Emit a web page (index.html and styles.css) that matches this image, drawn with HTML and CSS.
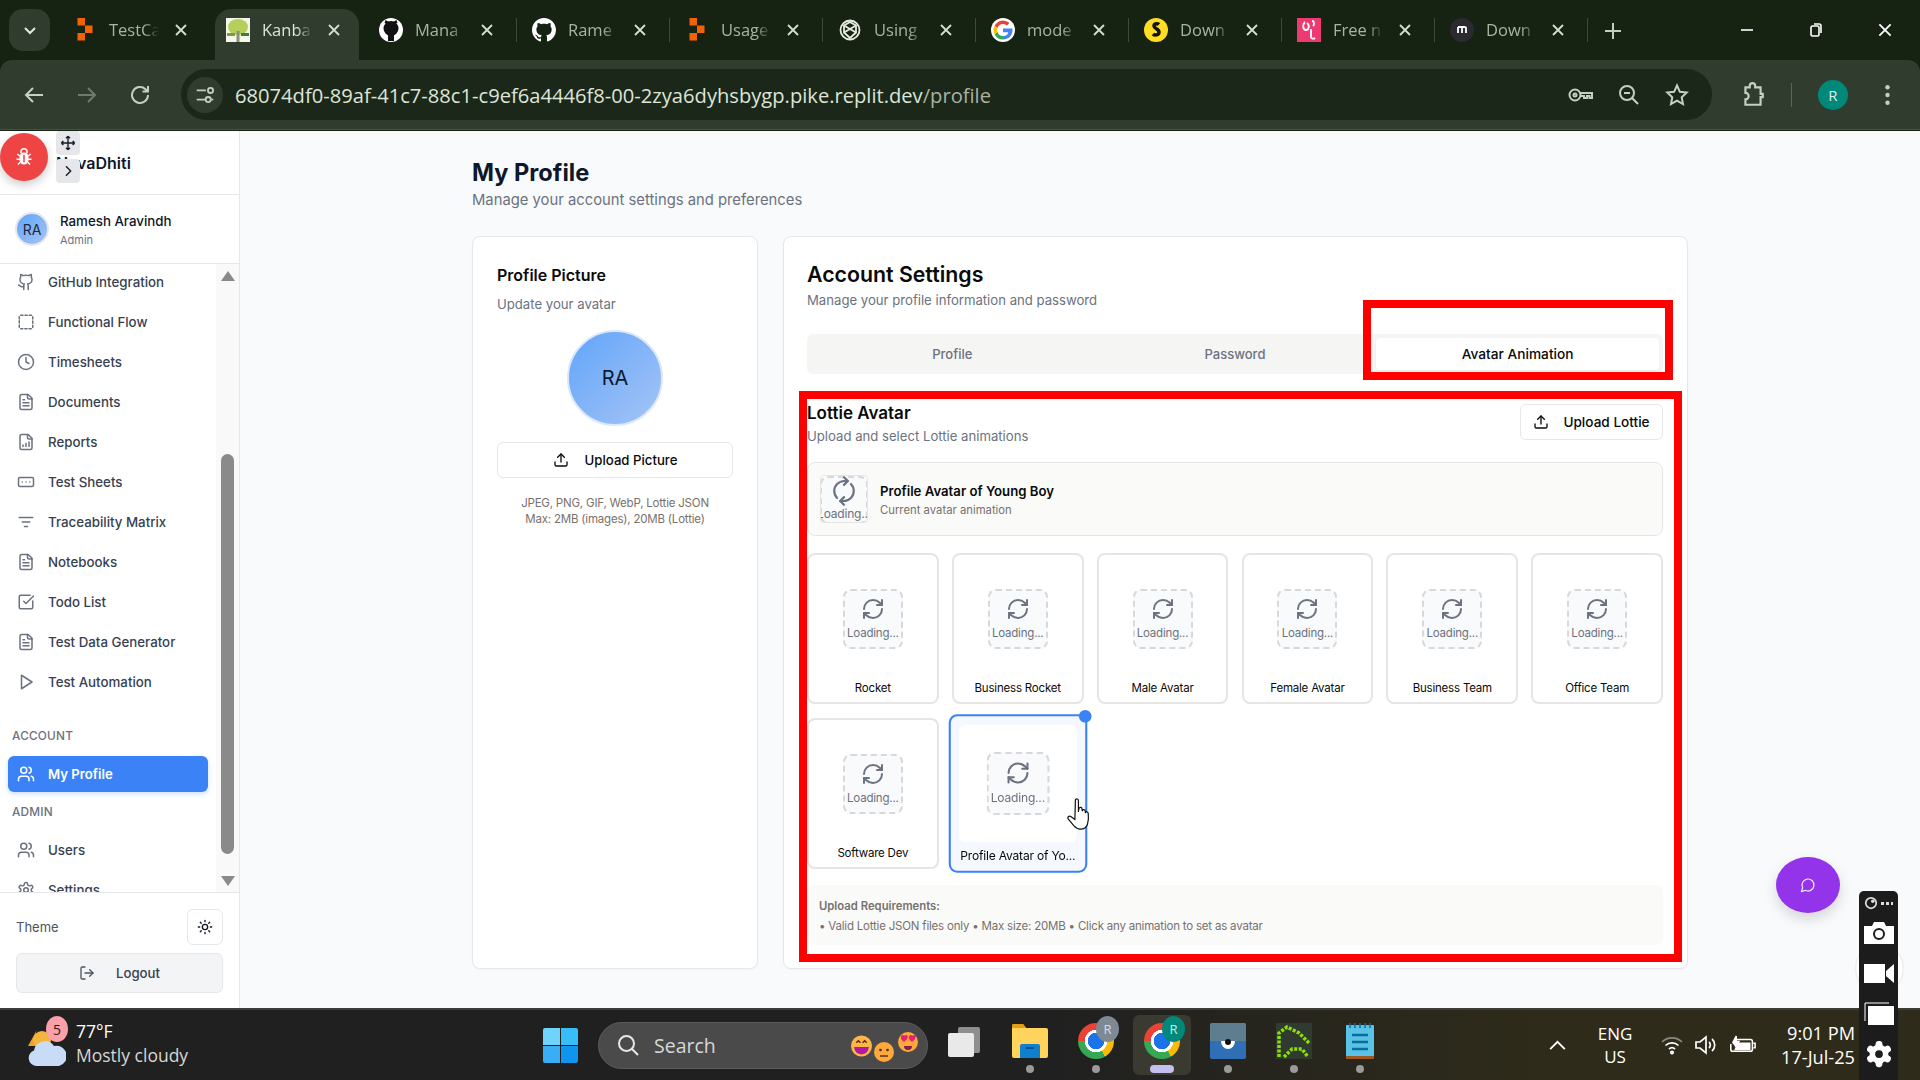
FILE: index.html
```html
<!DOCTYPE html>
<html lang="en">
<head>
<meta charset="utf-8">
<title>My Profile</title>
<link rel="stylesheet" href="styles.css">
</head>
<body>
<svg class="sprite" xmlns="http://www.w3.org/2000/svg">
  <symbol id="i-github" viewBox="0 0 24 24"><path d="M15 22v-4a4.8 4.8 0 0 0-1-3.5c3 0 6-2 6-5.5.08-1.25-.27-2.48-1-3.5.28-1.15.28-2.35 0-3.5 0 0-1 0-3 1.5-2.64-.5-5.36-.5-8 0C6 2 5 2 5 2c-.3 1.15-.3 2.35 0 3.5A5.403 5.403 0 0 0 4 9c0 3.5 3 5.5 6 5.5-.39.49-.68 1.05-.85 1.65-.17.6-.22 1.23-.15 1.85v4"/><path d="M9 18c-4.51 2-5-2-7-2"/></symbol>
  <symbol id="i-dashed" viewBox="0 0 24 24"><rect x="3" y="3" width="18" height="18" rx="2" stroke-dasharray="3 2.6"/></symbol>
  <symbol id="i-clock" viewBox="0 0 24 24"><circle cx="12" cy="12" r="10"/><path d="M12 6v6l4 2"/></symbol>
  <symbol id="i-file" viewBox="0 0 24 24"><path d="M15 2H6a2 2 0 0 0-2 2v16a2 2 0 0 0 2 2h12a2 2 0 0 0 2-2V7Z"/><path d="M14 2v4a2 2 0 0 0 2 2h4"/><path d="M10 9H8"/><path d="M16 13H8"/><path d="M16 17H8"/></symbol>
  <symbol id="i-chart" viewBox="0 0 24 24"><path d="M15 2H6a2 2 0 0 0-2 2v16a2 2 0 0 0 2 2h12a2 2 0 0 0 2-2V7Z"/><path d="M14 2v4a2 2 0 0 0 2 2h4"/><path d="M8 18v-2"/><path d="M12 18v-4"/><path d="M16 18v-6"/></symbol>
  <symbol id="i-sheet" viewBox="0 0 24 24"><rect x="2" y="6" width="20" height="12" rx="2"/><path d="M7 12h.01"/><path d="M12 12h.01"/><path d="M17 12h.01"/></symbol>
  <symbol id="i-lines" viewBox="0 0 24 24"><path d="M3 6h18"/><path d="M7 12h10"/><path d="M10 18h4"/></symbol>
  <symbol id="i-check" viewBox="0 0 24 24"><path d="M21 10.5V19a2 2 0 0 1-2 2H5a2 2 0 0 1-2-2V5a2 2 0 0 1 2-2h12.5"/><path d="m9 11 3 3L22 4"/></symbol>
  <symbol id="i-play" viewBox="0 0 24 24"><polygon points="6 3 20 12 6 21 6 3"/></symbol>
  <symbol id="i-users" viewBox="0 0 24 24"><path d="M16 21v-2a4 4 0 0 0-4-4H6a4 4 0 0 0-4 4v2"/><circle cx="9" cy="7" r="4"/><path d="M22 21v-2a4 4 0 0 0-3-3.87"/><path d="M16 3.13a4 4 0 0 1 0 7.75"/></symbol>
  <symbol id="i-gear" viewBox="0 0 24 24"><path d="M12.22 2h-.44a2 2 0 0 0-2 2v.18a2 2 0 0 1-1 1.73l-.43.25a2 2 0 0 1-2 0l-.15-.08a2 2 0 0 0-2.73.73l-.22.38a2 2 0 0 0 .73 2.73l.15.1a2 2 0 0 1 1 1.72v.51a2 2 0 0 1-1 1.74l-.15.09a2 2 0 0 0-.73 2.73l.22.38a2 2 0 0 0 2.73.73l.15-.08a2 2 0 0 1 2 0l.43.25a2 2 0 0 1 1 1.73V20a2 2 0 0 0 2 2h.44a2 2 0 0 0 2-2v-.18a2 2 0 0 1 1-1.73l.43-.25a2 2 0 0 1 2 0l.15.08a2 2 0 0 0 2.73-.73l.22-.39a2 2 0 0 0-.73-2.73l-.15-.08a2 2 0 0 1-1-1.74v-.5a2 2 0 0 1 1-1.74l.15-.09a2 2 0 0 0 .73-2.73l-.22-.38a2 2 0 0 0-2.73-.73l-.15.08a2 2 0 0 1-2 0l-.43-.25a2 2 0 0 1-1-1.73V4a2 2 0 0 0-2-2z"/><circle cx="12" cy="12" r="3"/></symbol>
  <symbol id="i-sun" viewBox="0 0 24 24"><circle cx="12" cy="12" r="4"/><path d="M12 2v2M12 20v2M4.93 4.93l1.41 1.41M17.66 17.66l1.41 1.41M2 12h2M20 12h2M6.34 17.66l-1.41 1.41M19.07 4.93l-1.41 1.41"/></symbol>
  <symbol id="i-logout" viewBox="0 0 24 24"><path d="M9 21H5a2 2 0 0 1-2-2V5a2 2 0 0 1 2-2h4"/><path d="m16 17 5-5-5-5"/><path d="M21 12H9"/></symbol>
  <symbol id="i-upload" viewBox="0 0 24 24"><path d="M21 15v4a2 2 0 0 1-2 2H5a2 2 0 0 1-2-2v-4"/><path d="m17 8-5-5-5 5"/><path d="M12 3v12"/></symbol>
  <symbol id="i-refresh" viewBox="0 0 24 24"><path d="M3 12a9 9 0 0 1 9-9 9.75 9.75 0 0 1 6.74 2.74L21 8"/><path d="M21 3v5h-5"/><path d="M21 12a9 9 0 0 1-9 9 9.75 9.75 0 0 1-6.74-2.74L3 16"/><path d="M8 16H3v5"/></symbol>
  <symbol id="i-close" viewBox="0 0 16 16"><path d="M3 3l10 10M13 3 3 13"/></symbol>
  <symbol id="f-replit" viewBox="0 0 16 16"><path fill="#f26207" d="M3 0h5v5H3zM8 5h5v5H8zM3 10h5v5H3z"/></symbol>
  <symbol id="f-octo" viewBox="0 0 16 16"><path d="M8 0C3.58 0 0 3.58 0 8c0 3.54 2.29 6.53 5.47 7.59.4.07.55-.17.55-.38 0-.19-.01-.82-.01-1.49-2.01.37-2.53-.49-2.69-.94-.09-.23-.48-.94-.82-1.13-.28-.15-.68-.52-.01-.53.63-.01 1.08.58 1.23.82.72 1.21 1.87.87 2.33.66.07-.52.28-.87.51-1.07-1.78-.2-3.64-.89-3.64-3.95 0-.87.31-1.59.82-2.15-.08-.2-.36-1.02.08-2.12 0 0 .67-.21 2.2.82.64-.18 1.32-.27 2-.27s1.36.09 2 .27c1.53-1.04 2.2-.82 2.2-.82.44 1.1.16 1.92.08 2.12.51.56.82 1.27.82 2.15 0 3.07-1.87 3.75-3.65 3.95.29.25.54.73.54 1.48 0 1.07-.01 1.93-.01 2.2 0 .21.15.46.55.38A8.013 8.013 0 0 0 16 8c0-4.42-3.58-8-8-8z"/></symbol>
</svg>

<header class="chrome">
  <div class="strip">
    <div class="tab-list"><svg class="ic-14 stroke-light"><path d="M2 5l5 5 5-5"/></svg></div>
    <div class="tab"><svg class="fav"><use href="#f-replit"/></svg><span class="tab-title">TestCa</span><svg class="tab-x"><use href="#i-close"/></svg></div>
    <div class="tab tab-active"><svg class="fav" viewBox="0 0 24 24"><rect width="24" height="24" fill="#f4f7ea"/><ellipse cx="12" cy="9" rx="10" ry="8" fill="#b5cf5a"/><rect x="10.5" y="13" width="3" height="11" fill="#8b8f7a"/><rect x="1" y="15" width="8" height="3" fill="#7c9a3a"/><rect x="15" y="15" width="8" height="3" fill="#3f7a4b"/></svg><span class="tab-title">Kanba</span><svg class="tab-x"><use href="#i-close"/></svg></div>
    <div class="tab"><svg class="fav" viewBox="0 0 24 24"><circle cx="12" cy="12" r="12" fill="#fff"/><circle cx="12" cy="10.500" r="7.500" fill="#111"/><path d="M5.500 5l1-3 3.500 2h4l3.500-2 1 3z" fill="#111"/><rect x="9" y="16" width="6" height="7" fill="#111"/></svg><span class="tab-title">Mana</span><svg class="tab-x"><use href="#i-close"/></svg></div>
    <div class="tab"><svg class="fav fav-white"><use href="#f-octo"/></svg><span class="tab-title">Rame</span><svg class="tab-x"><use href="#i-close"/></svg></div>
    <div class="tab"><svg class="fav"><use href="#f-replit"/></svg><span class="tab-title">Usage</span><svg class="tab-x"><use href="#i-close"/></svg></div>
    <div class="tab"><svg class="fav" viewBox="0 0 24 24" fill="none" stroke="#e8ede4" stroke-width="1.8"><circle cx="12" cy="12" r="9.5"/><path d="M12 4l6 3.5v7L12 20l-6-5.5v-7z"/><path d="M6 7.5l12 7M18 7.5l-12 7"/></svg><span class="tab-title">Using</span><svg class="tab-x"><use href="#i-close"/></svg></div>
    <div class="tab"><svg class="fav" viewBox="0 0 24 24"><circle cx="12" cy="12" r="12" fill="#fff"/><path d="M12 6a6 6 0 0 1 4 1.5l2.4-2.4A9.5 9.5 0 0 0 3.6 7.7l2.9 2.2A6 6 0 0 1 12 6z" fill="#ea4335"/><path d="M6.5 14l-2.9 2.2a9.5 9.5 0 0 0 8.400 5.300V18a6 6 0 0 1-5.500-4z" fill="#34a853"/><path d="M3.600 7.700a9.500 9.500 0 0 0 0 8.500l2.900-2.200a6 6 0 0 1 0-4.100z" fill="#fbbc05"/><path d="M21.300 10.500H12v3.700h5.300A5 5 0 0 1 12 18v3.500c5.500 0 9.500-3.800 9.500-9.500 0-.5 0-1-.2-1.500z" fill="#4285f4"/></svg><span class="tab-title">mode</span><svg class="tab-x"><use href="#i-close"/></svg></div>
    <div class="tab"><svg class="fav" viewBox="0 0 24 24"><circle cx="12" cy="12" r="12" fill="#ffdd22"/><path d="M15 6.500c-1-1-5-1.500-5 1.500s5 2.500 5 6-4.500 3.500-6 2" fill="none" stroke="#111" stroke-width="3.500"/></svg><span class="tab-title">Down</span><svg class="tab-x"><use href="#i-close"/></svg></div>
    <div class="tab"><svg class="fav" viewBox="0 0 24 24"><rect width="24" height="24" fill="#ee3a73"/><path d="M8 4c-3 3-2 8 1 8s4-5 1-7M15 3c2 0 3 3 1 5M14 11v8c0 2 3 2 4 1" fill="none" stroke="#fff" stroke-width="1.800"/></svg><span class="tab-title">Free n</span><svg class="tab-x"><use href="#i-close"/></svg></div>
    <div class="tab"><svg class="fav" viewBox="0 0 24 24"><circle cx="12" cy="12" r="12" fill="#2a2a30"/><path d="M8 15V9M12 15V9M16 15V10q0-1-2-1H8" fill="none" stroke="#fff" stroke-width="1.800"/></svg><span class="tab-title">Down</span><svg class="tab-x"><use href="#i-close"/></svg></div>
    <svg class="plus"><path d="M10 2v16M2 10h16"/></svg>
    <div class="win-controls">
      <div class="win-btn"><svg class="win-ic"><path d="M2 8h12"/></svg></div>
      <div class="win-btn"><svg class="win-ic"><rect x="3" y="4" width="8" height="10" rx="1.500"/><path d="M6 2h5a2 2 0 0 1 2 2v7"/></svg></div>
      <div class="win-btn"><svg class="win-ic win-x"><use href="#i-close"/></svg></div>
    </div>
  </div>
  <div class="toolbar">
    <div class="nav-btn"><svg class="tb-ic" viewBox="0 0 24 24"><path d="M21 12H4M11 5l-7 7 7 7"/></svg></div>
    <div class="nav-btn nav-dim"><svg class="tb-ic" viewBox="0 0 24 24"><path d="M3 12h17M13 5l7 7-7 7"/></svg></div>
    <div class="nav-btn"><svg class="tb-ic" viewBox="0 0 24 24"><path d="M20 12a8 8 0 1 1-2.500-5.800L20 8.500M20 3v5.500h-5.500"/></svg></div>
    <div class="pill">
      <div class="site-btn"><svg class="tb-ic tb-ic-sm" viewBox="0 0 24 24"><path d="M3 7h10M19 17h2M3 17h9"/><circle cx="18" cy="7" r="2.800"/><circle cx="15.500" cy="17" r="2.800"/></svg></div>
      <div class="url"><span class="url-host">68074df0-89af-41c7-88c1-c9ef6a4446f8-00-2zya6dyhsbygp.pike.replit.dev</span><span class="url-path">/profile</span></div>
      <div class="pill-ic"><svg class="tb-ic tb-ic-lg" viewBox="0 0 28 24"><circle cx="8" cy="12" r="5.500"/><circle cx="8" cy="12" r="1.500"/><path d="M13 10h12v5h-2.500v-2H20v2h-3v-2h-4"/></svg></div>
      <div class="pill-ic"><svg class="tb-ic" viewBox="0 0 24 24"><circle cx="10" cy="10" r="7"/><path d="M15 15l6 6M7 10h6"/></svg></div>
      <div class="pill-ic"><svg class="tb-ic" viewBox="0 0 24 24"><path d="M12 2.500l2.900 6.300 6.800.8-5 4.700 1.300 6.800-6-3.400-6 3.400 1.300-6.800-5-4.700 6.800-.8z"/></svg></div>
    </div>
    <div class="tb-right">
      <svg class="tb-ic tb-ext" viewBox="0 0 24 24"><path d="M5 5h4V3.500a2 2 0 0 1 5 0V5h5v6h2v3h-2v7H5v-5a2 2 0 0 0 0-6z"/></svg>
      <span class="tb-sep"></span>
      <span class="profile-dot">R</span>
      <svg class="tb-menu" viewBox="0 0 4 20"><circle cx="2" cy="3" r="2"/><circle cx="2" cy="10" r="2"/><circle cx="2" cy="17" r="2"/></svg>
    </div>
  </div>
</header>

<div class="app">
  <aside class="sidebar">
    <div class="brand">NavaDhiti</div>
    <div class="user">
      <div class="avatar-sm">RA</div>
      <div class="user-meta"><div class="user-name">Ramesh Aravindh</div><div class="user-role">Admin</div></div>
    </div>
    <div class="nav-wrap">
      <nav class="nav">
        <a class="nav-item"><svg class="ic"><use href="#i-github"/></svg>GitHub Integration</a>
        <a class="nav-item"><svg class="ic"><use href="#i-dashed"/></svg>Functional Flow</a>
        <a class="nav-item"><svg class="ic"><use href="#i-clock"/></svg>Timesheets</a>
        <a class="nav-item"><svg class="ic"><use href="#i-file"/></svg>Documents</a>
        <a class="nav-item"><svg class="ic"><use href="#i-chart"/></svg>Reports</a>
        <a class="nav-item"><svg class="ic"><use href="#i-sheet"/></svg>Test Sheets</a>
        <a class="nav-item"><svg class="ic"><use href="#i-lines"/></svg>Traceability Matrix</a>
        <a class="nav-item"><svg class="ic"><use href="#i-file"/></svg>Notebooks</a>
        <a class="nav-item"><svg class="ic"><use href="#i-check"/></svg>Todo List</a>
        <a class="nav-item"><svg class="ic"><use href="#i-file"/></svg>Test Data Generator</a>
        <a class="nav-item"><svg class="ic"><use href="#i-play"/></svg>Test Automation</a>
        <div class="nav-label nav-label-account">ACCOUNT</div>
        <a class="nav-item nav-active"><svg class="ic"><use href="#i-users"/></svg>My Profile</a>
        <div class="nav-label nav-label-admin">ADMIN</div>
        <a class="nav-item"><svg class="ic"><use href="#i-users"/></svg>Users</a>
        <a class="nav-item"><svg class="ic"><use href="#i-gear"/></svg>Settings</a>
      </nav>
      <div class="scrollbar">
        <span class="arrow-up"></span>
        <span class="thumb"></span>
        <span class="arrow-down"></span>
      </div>
    </div>
    <div class="side-foot">
      <div class="theme-row"><span class="theme-label">Theme</span><span class="theme-btn"><svg class="ic-16"><use href="#i-sun"/></svg></span></div>
      <div class="logout"><svg class="ic-16 logout-ic"><use href="#i-logout"/></svg>Logout</div>
    </div>
  </aside>

  <main class="main">
    <div class="container">
      <h1 class="page-title">My Profile</h1>
      <p class="page-sub">Manage your account settings and preferences</p>
      <div class="columns">
        <section class="card card-left">
          <h2 class="pic-title">Profile Picture</h2>
          <p class="muted pic-sub">Update your avatar</p>
          <div class="avatar-lg">RA</div>
          <div class="btn btn-wide"><svg class="ic-16"><use href="#i-upload"/></svg>Upload Picture</div>
          <p class="pic-note">JPEG, PNG, GIF, WebP, Lottie JSON<br>Max: 2MB (images), 20MB (Lottie)</p>
        </section>
        <section class="card card-right">
          <h2 class="acc-title">Account Settings</h2>
          <p class="muted acc-sub">Manage your profile information and password</p>
          <div class="tabs">
            <div class="tabs-item">Profile</div>
            <div class="tabs-item">Password</div>
            <div class="tabs-item tabs-on">Avatar Animation</div>
          </div>
          <div class="lottie-head">
            <div>
              <h3 class="lottie-title">Lottie Avatar</h3>
              <p class="muted lottie-sub">Upload and select Lottie animations</p>
            </div>
            <div class="btn btn-lottie"><svg class="ic-16"><use href="#i-upload"/></svg>Upload Lottie</div>
          </div>
          <div class="current">
            <div class="cur-thumb">
              <div class="ph ph-cur"><svg class="ph-ic ph-ic-cur"><use href="#i-refresh"/></svg><span>Loading...</span></div>
            </div>
            <div>
              <div class="cur-name">Profile Avatar of Young Boy</div>
              <div class="cur-sub">Current avatar animation</div>
            </div>
          </div>
          <div class="grid">
            <div class="anim"><div class="preview"><div class="ph"><svg class="ph-ic"><use href="#i-refresh"/></svg><span>Loading...</span></div></div><div class="anim-label">Rocket</div></div>
            <div class="anim"><div class="preview"><div class="ph"><svg class="ph-ic"><use href="#i-refresh"/></svg><span>Loading...</span></div></div><div class="anim-label">Business Rocket</div></div>
            <div class="anim"><div class="preview"><div class="ph"><svg class="ph-ic"><use href="#i-refresh"/></svg><span>Loading...</span></div></div><div class="anim-label">Male Avatar</div></div>
            <div class="anim"><div class="preview"><div class="ph"><svg class="ph-ic"><use href="#i-refresh"/></svg><span>Loading...</span></div></div><div class="anim-label">Female Avatar</div></div>
            <div class="anim"><div class="preview"><div class="ph"><svg class="ph-ic"><use href="#i-refresh"/></svg><span>Loading...</span></div></div><div class="anim-label">Business Team</div></div>
            <div class="anim"><div class="preview"><div class="ph"><svg class="ph-ic"><use href="#i-refresh"/></svg><span>Loading...</span></div></div><div class="anim-label">Office Team</div></div>
            <div class="anim"><div class="preview"><div class="ph"><svg class="ph-ic"><use href="#i-refresh"/></svg><span>Loading...</span></div></div><div class="anim-label">Software Dev</div></div>
            <div class="anim anim-on"><span class="anim-dot"></span><div class="preview"><div class="ph"><svg class="ph-ic"><use href="#i-refresh"/></svg><span>Loading...</span></div></div><div class="anim-label">Profile Avatar of Yo...</div>
              <svg class="hand" viewBox="0 0 26 34"><path d="M9 2.500c1-1.500 3-1 3 .8V14l.5-3c.5-1.500 3-1.500 3 .3l.3 2c.3-1.500 2.700-1.500 3 .3l.2 1.500c.5-1 2.500-1 2.700.8 .5 4 .3 8-.8 11-1 3-3.500 4.600-7 4.600-3 0-4.700-1.500-6.500-3.500L2 21.500c-1.500-1.500.5-3.700 2.500-2.500L8.500 22z"/></svg>
            </div>
          </div>
          <div class="req">
            <div class="req-title">Upload Requirements:</div>
            <div class="req-text">• Valid Lottie JSON files only • Max size: 20MB • Click any animation to set as avatar</div>
          </div>
        </section>
      </div>
    </div>
  </main>
</div>

<footer class="taskbar">
  <div class="weather">
    <svg class="weather-ic" viewBox="0 0 38 46"><path d="M10 6a14 14 0 0 0 2 18L0 24z" fill="#f0a030"/><circle cx="14" cy="18" r="9" fill="#f5b53a"/><path d="M8 44a8 8 0 0 1-2-15.500A11 11 0 0 1 26 24a10 10 0 0 1 5 20z" fill="#c9dcf7"/></svg>
    <span class="weather-badge">5</span>
    <div class="weather-text"><div class="w-temp">77°F</div><div class="w-desc">Mostly cloudy</div></div>
  </div>
  <svg class="win-logo" viewBox="0 0 35 35"><path d="M0 2a2 2 0 0 1 2-2h15v17H0z" fill="#6fd3fb"/><path d="M18 0h15a2 2 0 0 1 2 2v15H18z" fill="#38bdf8"/><path d="M0 18h17v17H2a2 2 0 0 1-2-2z" fill="#3aaef5"/><path d="M18 18h17v15a2 2 0 0 1-2 2H18z" fill="#0f94f0"/></svg>
  <div class="search">
    <svg class="search-ic" viewBox="0 0 24 24"><circle cx="10.500" cy="10.500" r="7.500"/><path d="M16 16l6 6"/></svg>
    <span class="search-text">Search</span>
    <svg class="emoji e1" viewBox="0 0 20 20"><circle cx="10" cy="10" r="10" fill="#ffb648"/><path d="M3 11h14a7 7 0 0 1-14 0z" fill="#b5179e"/><path d="M5 7l2-2 2 2M11 7l2-2 2 2" fill="none" stroke="#5a2a10" stroke-width="1.300"/></svg>
    <svg class="emoji e2" viewBox="0 0 20 20"><circle cx="10" cy="10" r="10" fill="#ffa83e"/><circle cx="6.500" cy="8" r="1.300" fill="#4a2a10"/><circle cx="13.500" cy="8" r="1.300" fill="#4a2a10"/><path d="M6 14h8" stroke="#4a2a10" stroke-width="1.400"/></svg>
    <svg class="emoji e3" viewBox="0 0 20 20"><circle cx="10" cy="10" r="10" fill="#ffa83e"/><path d="M6 10C2 7 2 3 5 3c1 0 1 1 1 1s1-1 2-1c3 0 2 4-2 7zM14 10c-4-3-4-7-1-7 1 0 1 1 1 1s1-1 2-1c3 0 2 4-2 7z" fill="#e8206f"/><path d="M6 14a4 4 0 0 0 8 0z" fill="#8a1c4a"/></svg>
  </div>
  <div class="apps">
    <div class="app-slot"><svg class="app-ic" viewBox="0 0 36 36"><rect x="12" y="4" width="22" height="26" rx="2" fill="#8e8e8e"/><rect x="2" y="10" width="26" height="24" rx="2" fill="#e9e9e9"/></svg></div>
    <div class="app-slot"><svg class="app-ic" viewBox="0 0 36 36"><path d="M0 3a2 2 0 0 1 2-2h9l3 4h20a2 2 0 0 1 2 2v26a2 2 0 0 1-2 2H2a2 2 0 0 1-2-2z" fill="#ffd35c"/><path d="M0 3a2 2 0 0 1 2-2h9l3 4H0z" fill="#e3a010"/><path d="M10 21h16a2 2 0 0 1 2 2v12H8V23a2 2 0 0 1 2-2z" fill="#0f7fd0"/><path d="M14 25h8" stroke="#0a4f8a" stroke-width="2"/></svg><span class="app-dot"></span></div>
    <div class="app-slot"><span class="chrome-ic"></span><span class="app-badge">R</span><span class="app-dot"></span></div>
    <div class="app-slot app-slot-on"><span class="chrome-ic"></span><span class="app-badge app-badge-on">R</span><span class="app-dot app-dot-on"></span></div>
    <div class="app-slot"><svg class="app-ic" viewBox="0 0 36 36"><rect width="36" height="36" rx="2" fill="#2f6fb5"/><path d="M0 2a2 2 0 0 1 2-2h32a2 2 0 0 1 2 2v16H0z" fill="#5e7d8f"/><path d="M11 18a7 8 0 0 0 14 0z" fill="#fff"/><circle cx="18" cy="19" r="3" fill="#111"/></svg><span class="app-dot"></span></div>
    <div class="app-slot"><svg class="app-ic" viewBox="0 0 36 36"><rect width="36" height="36" fill="#2f3a30"/><path d="M3 34V10l8-6 12 6 10 10M8 34l8-8 10 0 6 8" fill="none" stroke="#8ee000" stroke-width="3.500" stroke-dasharray="3 1.500"/></svg><span class="app-dot"></span></div>
    <div class="app-slot"><svg class="app-ic app-ic-note" viewBox="0 0 28 36"><rect y="2" width="28" height="34" rx="1" fill="#a05a20"/><rect y="2" width="28" height="31" rx="1" fill="#58c3e6"/><path d="M6 12h16M6 19h16M6 26h16" stroke="#0d6d9a" stroke-width="2.500"/><path d="M4 0v5M9 0v5M14 0v5M19 0v5M24 0v5" stroke="#0d6d9a" stroke-width="1.500"/></svg><span class="app-dot"></span></div>
  </div>
  <div class="tray">
    <svg class="tray-chev" viewBox="0 0 18 12"><path d="M1 10l8-8 8 8"/></svg>
    <div class="tray-lang">ENG<br>US</div>
    <svg class="tray-ic tray-wifi" viewBox="0 0 24 24"><path d="M2 9a14 14 0 0 1 20 0" opacity=".45"/><path d="M5.500 12.500a9.500 9.500 0 0 1 13 0M9 16a4.500 4.500 0 0 1 6 0"/><circle cx="12" cy="19.500" r="1.200"/></svg>
    <svg class="tray-ic tray-vol" viewBox="0 0 26 24"><path d="M2 9v6h4l6 5V4L6 9z"/><path d="M15 9a4 4 0 0 1 0 6M18 6a8 8 0 0 1 0 12"/></svg>
    <svg class="tray-ic tray-bat" viewBox="0 0 30 24"><path d="M7 6h17a2 2 0 0 1 2 2v9a2 2 0 0 1-2 2H4a2 2 0 0 1-2-2v-6"/><path d="M27 10h2v5h-2"/><path d="M4 10L8 2v6h3l-4 6" fill="#fff"/><path d="M10 10h13v7H7z" fill="#fff"/></svg>
    <div class="tray-time"><div>9:01 PM</div><div>17-Jul-25</div></div>
  </div>
</footer>

<div class="mark mark-tab"></div>
<div class="mark mark-panel"></div>

<div class="debug-fab"><svg class="bug" viewBox="0 0 24 24"><path d="M8 7V5a4 4 0 0 1 8 0v2"/><rect x="7" y="7" width="10" height="14" rx="5" fill="#fff"/><path d="M12 9v10" stroke="#ef4444"/><path d="M7 11 3 8M17 11l4-3M7 15H2M17 15h5M7 19l-3 3M17 19l3 3"/></svg></div>
<div class="debug-handle debug-move"><svg class="handle-ic" viewBox="0 0 24 24"><path d="M12 2v20M2 12h20M12 2 9 5M12 2l3 3M12 22l-3-3M12 22l3-3M2 12l3-3M2 12l3 3M22 12l-3-3M22 12l-3 3"/></svg></div>
<div class="debug-handle debug-chev"><svg class="handle-ic" viewBox="0 0 24 24"><path d="m9 5 7 7-7 7"/></svg></div>

<div class="chat-fab"><svg class="chat-ic" viewBox="0 0 24 24"><path d="M7.900 20A9 9 0 1 0 4 16.100L2 22Z"/></svg></div>

<div class="rec-halo"></div>
<div class="recorder">
  <div class="rec-top"><svg class="rec-logo" viewBox="0 0 16 16"><circle cx="8" cy="8" r="6" fill="none" stroke="#ddd" stroke-width="2"/><circle cx="10" cy="6" r="2" fill="#ddd"/></svg><span class="rec-dots"></span></div>
  <svg class="rec-ic rec-cam" viewBox="0 0 30 22"><path fill="#fff" fill-rule="evenodd" d="M0 4h8l2-4h10l2 4h8v18H0zM15 6a6 6 0 1 0 0 12 6 6 0 0 0 0-12zm0 2a4 4 0 1 1 0 8 4 4 0 0 1 0-8z"/></svg>
  <svg class="rec-ic rec-vid" viewBox="0 0 30 19"><path fill="#fff" d="M0 0h21v19H0zM22 7l8-7v19l-8-7z"/></svg>
  <svg class="rec-ic rec-win" viewBox="0 0 30 23"><path fill="none" stroke="#fff" d="M1 19V1h24"/><rect x="4" y="4" width="26" height="19" fill="#fff"/></svg>
  <svg class="rec-ic rec-gear" viewBox="0 0 24 24"><use href="#i-gear"/><circle cx="12" cy="12" r="3.600" fill="#1c1c1c"/></svg>
</div>
</body>
</html>
```

FILE: styles.css
```css
* { box-sizing: border-box; }
html, body { margin: 0; height: 100%; }
body {
  width: 1920px; height: 1080px; overflow: hidden;
  display: flex; flex-direction: column; position: relative;
  font-family: Inter, "Liberation Sans", sans-serif; color: #0f172a; background: #f9fafb;
}
h1, h2, h3, p { margin: 0; }
.sprite { position: absolute; width: 0; height: 0; }

/* Browser chrome */
.chrome { flex: none; height: 131px; background: #172312; font-family: "Open Sans", "Noto Sans", sans-serif; }
.strip { height: 60px; display: flex; align-items: flex-start; padding: 9px 0 0 9px; }
.tab-list { width: 41px; height: 42px; border-radius: 14px; background: #2f3c2e; display: flex; align-items: center; justify-content: center; margin-right: 11px; }
.ic-14 { width: 14px; height: 14px; }
.stroke-light { fill: none; stroke: #e2e8de; stroke-width: 2; }
.tab { width: 153px; height: 51px; flex: none; display: flex; align-items: center; padding: 0 0 10px 12px; position: relative; }
.tab::after { content: ""; position: absolute; right: 3px; top: 9px; width: 1px; height: 24px; background: #3d4a3a; }
.tab-active { background: #2f3c2e; border-radius: 16px 16px 0 0; width: 144px; margin-right: 9px; margin-left: 1px; padding-left: 11px; }
.tab-active + .tab { margin-left: -1px; }
.tab-active::after { display: none; }
.tab:nth-child(2)::after { display: none; }
.fav { width: 24px; height: 24px; flex: none; }
.fav-white { fill: #fff; }
.tab-title {
  width: 50px; margin-left: 12px; overflow: hidden; white-space: nowrap; font-size: 16.500px; color: #a9b3a4; flex: none;
  -webkit-mask-image: linear-gradient(90deg, #000 70%, transparent);
  mask-image: linear-gradient(90deg, #000 70%, transparent);
}
.tab-active .tab-title { color: #dde5d8; }
.tab-x { width: 16px; height: 16px; margin-left: 14px; fill: none; stroke: #d6ded1; stroke-width: 1.8; flex: none; }
.plus { width: 20px; height: 20px; margin: 12px 0 0 12px; fill: none; stroke: #c5cfc0; stroke-width: 2; flex: none; }
.win-controls { margin-left: auto; display: flex; margin-right: 1px; }
.win-btn { width: 69px; height: 42px; display: flex; align-items: center; justify-content: center; }
.win-ic { width: 16px; height: 16px; fill: none; stroke: #fff; stroke-width: 1.6; }
.win-x { stroke-width: 1.6; width: 18px; height: 18px; }
.toolbar { height: 70px; background: #2f3c2e; border-radius: 12px 12px 0 0; display: flex; align-items: center; padding-left: 7px; border-bottom: 1px solid #465344; }
.nav-btn { width: 53px; display: flex; justify-content: center; flex: none; }
.tb-ic { width: 24px; height: 24px; fill: none; stroke: #c6d0c1; stroke-width: 2; flex: none; }
.tb-ic-sm { width: 22px; height: 22px; }
.tb-ic-lg { width: 28px; height: 24px; }
.nav-dim .tb-ic { stroke: #6f7b6b; }
.pill { margin-left: 15px; width: 1531px; height: 51px; flex: none; border-radius: 26px; background: #1b2718; display: flex; align-items: center; padding: 0 11px 0 6px; }
.site-btn { width: 36px; height: 36px; border-radius: 50%; background: #2f3c2e; display: flex; align-items: center; justify-content: center; flex: none; }
.url { margin-left: 12px; font-size: 20.150px; color: #dde5d8; white-space: nowrap; flex: 1; }
.url-path { color: #a9b3a4; }
.pill-ic { width: 48px; display: flex; justify-content: center; flex: none; }
.tb-right { display: flex; align-items: center; flex: 1; position: relative; }
.tb-ext { margin-left: 28px; width: 26px; height: 28px; }
.tb-sep { width: 1px; height: 24px; background: #5a6757; margin-left: 25px; }
.profile-dot { width: 30px; height: 30px; border-radius: 50%; background: #00897b; color: #d9f0ec; font-size: 15px; display: flex; align-items: center; justify-content: center; margin-left: 26px; }
.tb-menu { width: 5px; height: 22px; fill: #c6d0c1; margin-left: 37px; }

/* App frame */
.app { flex: 1; display: flex; min-height: 0; }
.sidebar { width: 240px; flex: none; background: #fff; border-right: 1px solid #e5e7eb; display: flex; flex-direction: column; }
.brand { height: 64px; flex: none; border-bottom: 1px solid #e5e7eb; padding: 22px 0 0 56px; font-size: 16px; line-height: 20px; font-weight: 600; color: #0f172a; }
.user { height: 69px; flex: none; border-bottom: 1px solid #e5e7eb; display: flex; align-items: center; padding-left: 15px; gap: 11px; }
.avatar-sm { width: 34px; height: 34px; border-radius: 50%; border: 2px solid #e5e7eb; background: linear-gradient(135deg, #60a5fa, #a6c4f5); display: flex; align-items: center; justify-content: center; font-size: 14px; color: #1e293b; flex: none; }
.user-name { font-size: 13.300px; line-height: 18px; font-weight: 500; color: #0f172a; margin-top: 1px; }
.user-role { font-size: 11px; line-height: 16px; margin-top: 2px; color: #6b7280; }
.nav-wrap { flex: 1; min-height: 0; display: flex; overflow: hidden; }
.nav { flex: 1; padding: 0 8px; margin-top: -2px; min-width: 0; }
.nav-item { height: 40px; display: flex; align-items: center; gap: 13px; padding-left: 9px; font-size: 13.300px; font-weight: 500; color: #374151; border-radius: 6px; }
.ic { width: 18px; height: 18px; fill: none; stroke: #6b7280; stroke-width: 2; stroke-linecap: round; stroke-linejoin: round; flex: none; }
.ic-16 { width: 16px; height: 16px; fill: none; stroke: currentColor; stroke-width: 2; stroke-linecap: round; stroke-linejoin: round; flex: none; }
.nav-label { font-size: 11.800px; line-height: 16px; font-weight: 500; color: #6b7280; letter-spacing: .2px; padding-left: 4px; }
.nav-label-account { margin-top: 26px; margin-bottom: 12px; }
.nav-label-admin { margin-top: 12px; margin-bottom: 10px; }
.nav-active { height: 36px; background: #3b82f6; color: #fff; font-weight: 600; font-size: 13.200px; box-shadow: 0 2px 5px rgba(59,130,246,.25); }
.nav-active .ic { stroke: #fff; }
.scrollbar { width: 23px; flex: none; background: #f9f9f9; display: flex; flex-direction: column; align-items: center; padding-top: 7px; }
.arrow-up { width: 0; height: 0; border: 7.500px solid transparent; border-top: 0; border-bottom: 10px solid #8a8a8a; }
.thumb { width: 13px; height: 400px; border-radius: 7px; background: #8a8a8a; margin-top: 173px; flex: none; }
.arrow-down { width: 0; height: 0; border: 7.500px solid transparent; border-bottom: 0; border-top: 10px solid #8a8a8a; margin-top: 22px; }
.side-foot { flex: none; height: 116px; background: #fff; border-top: 1px solid #e5e7eb; padding: 16px 16px 0 16px; }
.theme-row { display: flex; align-items: center; justify-content: space-between; height: 36px; }
.theme-label { font-size: 13px; color: #4b5563; }
.theme-btn { width: 36px; height: 36px; border: 1px solid #e5e7eb; border-radius: 6px; display: flex; align-items: center; justify-content: center; color: #111827; }
.logout { margin-top: 8px; height: 40px; background: #f3f4f6; border: 1px solid #e5e7eb; border-radius: 6px; display: flex; align-items: center; justify-content: center; gap: 21px; font-size: 13.200px; font-weight: 500; color: #374151; }
.logout-ic { color: #4b5563; }

/* Main */
.main { flex: 1; min-width: 0; display: flex; justify-content: center; padding-top: 26px; background: #f9fafb; overflow: hidden; }
.container { width: 1216px; }
.page-title { font-size: 23.600px; line-height: 32px; font-weight: 700; color: #0f172a; }
.page-sub { font-size: 14.800px; line-height: 20px; margin-top: 1px; color: #6b7280; }
.columns { display: grid; grid-template-columns: 286px 1fr; gap: 25px; margin-top: 26px; align-items: stretch; }
.card { background: #fff; border: 1px solid #e5e7eb; border-radius: 8px; box-shadow: 0 1px 2px rgba(0,0,0,.03); }
.muted { color: #6b7280; font-size: 13.150px; line-height: 20px; }
.card-left { padding: 27px 24px 0; display: flex; flex-direction: column; }
.pic-title { font-size: 16px; line-height: 22px; font-weight: 600; color: #0a0a0a; }
.pic-sub { margin-top: 8px; }
.avatar-lg { width: 96px; height: 96px; margin: 16px auto 0; border-radius: 50%; border: 2px solid #dbe7fb; background: linear-gradient(135deg, #60a5fa, #a6c4f5); display: flex; align-items: center; justify-content: center; font-size: 20px; color: #0f172a; }
.btn { border: 1px solid #e5e7eb; border-radius: 6px; background: #fff; height: 36px; display: flex; align-items: center; justify-content: center; gap: 16px; font-size: 13.200px; font-weight: 500; color: #0a0a0a; }
.btn-wide { margin-top: 16px; flex: none; }
.pic-note { margin-top: 17px; text-align: center; font-size: 11.500px; letter-spacing: -.2px; line-height: 16px; color: #78716c; }
.card-right { padding: 23px 24px 23px 23px; }
.acc-title { font-size: 21.300px; line-height: 28px; font-weight: 600; color: #0a0a0a; }
.acc-sub { margin-top: 2px; }
.tabs { margin-top: 24px; height: 40px; background: #f5f5f4; border-radius: 6px; display: grid; grid-template-columns: repeat(3, 1fr); padding: 4px; }
.tabs-item { display: flex; align-items: center; justify-content: center; font-size: 13px; font-weight: 500; color: #6b7280; border-radius: 4px; }
.tabs-on { background: #fff; color: #0a0a0a; font-size: 13.700px; box-shadow: 0 1px 2px rgba(0,0,0,.06); }
.lottie-head { margin-top: 27px; display: flex; justify-content: space-between; align-items: flex-start; height: 61px; }
.lottie-title { font-size: 17px; line-height: 24px; font-weight: 600; color: #0a0a0a; }
.lottie-sub { margin-top: 1px; }
.btn-lottie { width: 143px; margin-top: 3px; gap: 14px; font-size: 13.600px; }
.current { height: 74px; border: 1px solid #e7e5e4; border-radius: 8px; background: #fafaf9; display: flex; align-items: center; gap: 12px; padding-left: 12px; }
.cur-thumb { width: 48px; height: 48px; flex: none; border: 1px solid #e7e5e4; border-radius: 4px; background: #fff; overflow: hidden; display: flex; justify-content: center; }
.cur-name { font-size: 13.200px; line-height: 18px; font-weight: 600; color: #0a0a0a; margin-top: 1px; }
.cur-sub { font-size: 11.300px; line-height: 16px; margin-top: 2px; color: #78716c; }
.grid { margin-top: 17px; display: grid; grid-template-columns: repeat(6, 1fr); gap: 14px 13.200px; }
.anim { position: relative; border: 2px solid #e7e5e4; border-radius: 8px; padding: 8px; background: #fff; min-width: 0; height: 151px; }
.preview { height: 112px; border-radius: 6px; background: #fff; display: flex; align-items: center; justify-content: center; }
.ph { width: 60px; height: 60px; flex: none; border: 2px dashed #d6d8dc; border-radius: 8px; background: #f9fafb; display: flex; flex-direction: column; align-items: center; justify-content: center; gap: 4px; color: #6b7280; font-size: 11.500px; letter-spacing: -.2px; line-height: 16px; white-space: nowrap; }
.ph-ic { width: 24px; height: 24px; fill: none; stroke: #6b7280; stroke-width: 2; stroke-linecap: round; stroke-linejoin: round; flex: none; }
.ph-cur { width: 48px; height: 48px; font-size: 12px; gap: 2px; justify-content: flex-start; background: #f9fafb; }
.ph-ic-cur { width: 26px; height: 26px; transform: rotate(-45deg); margin-top: 0; }
.anim-label { margin-top: 5px; font-size: 11.500px; letter-spacing: -.2px; line-height: 16px; text-align: center; color: #0a0a0a; white-space: nowrap; overflow: hidden; }
.anim-on { border-color: #3b82f6; background: #f5f8fe; transform: scale(1.05); }
.anim-dot { position: absolute; top: -6px; right: -6px; width: 12px; height: 12px; border-radius: 50%; background: #3b82f6; }
.hand { position: absolute; left: 110px; top: 77px; width: 25px; height: 33px; fill: #fff; stroke: #111; stroke-width: 1.200; stroke-linejoin: round; }
.req { margin-top: 16px; height: 60px; background: #fafaf9; border-radius: 6px; padding: 13px 12px; }
.req-title { font-size: 11.300px; line-height: 16px; font-weight: 600; color: #78716c; }
.req-text { font-size: 11.500px; letter-spacing: -.2px; line-height: 16px; margin-top: 4px; color: #78716c; }

/* Overlays */
.mark { position: absolute; border: 8px solid #f00; pointer-events: none; }
.mark-tab { left: 1363px; top: 300px; width: 310px; height: 80px; }
.mark-panel { left: 799px; top: 391px; width: 883px; height: 571px; }
.debug-fab { position: absolute; left: 0; top: 133px; width: 48px; height: 48px; border-radius: 50%; background: #ef4444; box-shadow: 0 4px 10px rgba(0,0,0,.2); display: flex; align-items: center; justify-content: center; }
.bug { width: 18px; height: 18px; fill: none; stroke: #fff; stroke-width: 2; }
.debug-handle { position: absolute; left: 56px; width: 24px; height: 24px; border-radius: 4px; background: #e5e7eb; display: flex; align-items: center; justify-content: center; }
.debug-move { top: 131px; }
.debug-chev { top: 159px; }
.handle-ic { width: 16px; height: 16px; fill: none; stroke: #111827; stroke-width: 2; }
.chat-fab { position: absolute; left: 1776px; top: 857px; width: 64px; height: 56px; border-radius: 50%; background: #9333ea; box-shadow: 0 6px 14px rgba(0,0,0,.15); display: flex; align-items: center; justify-content: center; }
.chat-ic { width: 16px; height: 16px; fill: none; stroke: #f3e8ff; stroke-width: 1.800; stroke-linejoin: round; }
.rec-halo { position: absolute; left: 1856px; top: 945px; width: 47px; height: 47px; border-radius: 50%; background: #fff; box-shadow: 0 0 2px rgba(0,0,0,.2); }
.recorder { position: absolute; left: 1859px; top: 891px; width: 39px; height: 189px; background: #1c1c1c; border-radius: 5px 5px 0 0; display: flex; flex-direction: column; align-items: center; padding-top: 5px; }
.rec-top { display: flex; align-items: center; gap: 3px; height: 14px; }
.rec-logo { width: 14px; height: 14px; }
.rec-dots { width: 12px; height: 3px; background: repeating-linear-gradient(90deg, #ddd 0 3px, transparent 3px 5px); }
.rec-ic { width: 30px; flex: none; }
.rec-cam { height: 22px; margin-top: 12px; }
.rec-vid { height: 19px; margin-top: 20px; }
.rec-win { height: 23px; margin-top: 19px; }
.rec-gear { height: 30px; margin-top: 14px; fill: #fff; stroke: #fff; stroke-width: 1; }

/* Taskbar */
.taskbar { flex: none; height: 72px; position: relative; display: flex; align-items: center; padding-left: 28px; background: linear-gradient(90deg, #202020 0 55%, #2e2b1a 80%); border-top: 2px solid #3c3c38; font-family: "Open Sans", "Noto Sans", sans-serif; color: #fff; }
.weather { width: 515px; flex: none; display: flex; align-items: center; position: relative; }
.weather-ic { width: 38px; height: 46px; flex: none; }
.weather-badge { position: absolute; left: 18px; top: -6px; width: 22px; height: 26px; border-radius: 50%; background: #f9a0a8; color: #30181a; font-size: 14px; display: flex; align-items: center; justify-content: center; }
.weather-text { margin: -4px 0 0 10px; font-size: 17.500px; line-height: 24px; white-space: nowrap; }
.w-desc { color: #d6d6d6; }
.win-logo { width: 35px; height: 35px; flex: none; }
.search { margin-left: 20px; width: 330px; height: 47px; flex: none; border-radius: 24px; background: #4a4a4a; border: 1px solid #5c5c5c; display: flex; align-items: center; padding-left: 17px; position: relative; }
.search-ic { width: 24px; height: 24px; fill: none; stroke: #e8e8e8; stroke-width: 2; flex: none; }
.search-text { margin-left: 14px; font-size: 19.500px; color: #d8d8d8; }
.emoji { position: absolute; }
.e1 { left: 252px; top: 12px; width: 21px; height: 22px; }
.e2 { left: 275px; top: 18px; width: 20px; height: 22px; }
.e3 { left: 299px; top: 8px; width: 20px; height: 22px; }
.apps { margin-left: 3px; display: flex; }
.app-slot { width: 66px; height: 60px; flex: none; display: flex; align-items: center; justify-content: center; position: relative; padding-bottom: 8px; border-radius: 6px; }
.app-slot-on { width: 58px; margin: 0 4px; background: #3a3a30; }
.app-ic { width: 36px; height: 36px; flex: none; }
.app-ic-note { width: 28px; height: 36px; }
.app-dot { position: absolute; bottom: 2px; left: 50%; margin-left: -4px; width: 8px; height: 8px; border-radius: 50%; background: #9a9a9a; }
.app-dot-on { width: 24px; margin-left: -12px; height: 8px; border-radius: 4px; background: #c5bff0; }
.chrome-ic { width: 36px; height: 36px; border-radius: 50%; background: radial-gradient(circle, #1a73e8 0 32%, #fff 33% 44%, transparent 45%), conic-gradient(from -90deg, #ea4335 0 120deg, #fbbc05 120deg 240deg, #34a853 240deg); }
.app-badge { position: absolute; left: 33px; top: 1px; width: 23px; height: 26px; border-radius: 50%; background: #7d8a94; color: #d5dde2; font-size: 13px; display: flex; align-items: center; justify-content: center; }
.app-badge-on { left: 29px; background: #00897b; color: #c9ece6; }
.tray { margin-left: auto; margin-right: 65px; display: flex; align-items: center; }
.tray-chev { width: 17px; height: 11px; fill: none; stroke: #fff; stroke-width: 2; flex: none; }
.tray-lang { margin-left: 29px; width: 40px; text-align: center; font-size: 17px; line-height: 23px; }
.tray-ic { fill: none; stroke: #fff; stroke-width: 1.700; flex: none; }
.tray-wifi { width: 24px; height: 24px; margin-left: 25px; }
.tray-vol { width: 26px; height: 24px; margin-left: 10px; }
.tray-bat { width: 27px; height: 24px; margin-left: 9px; }
.tray-time { width: 80px; margin-left: 19px; text-align: right; font-size: 18.200px; line-height: 24px; white-space: nowrap; }
```
